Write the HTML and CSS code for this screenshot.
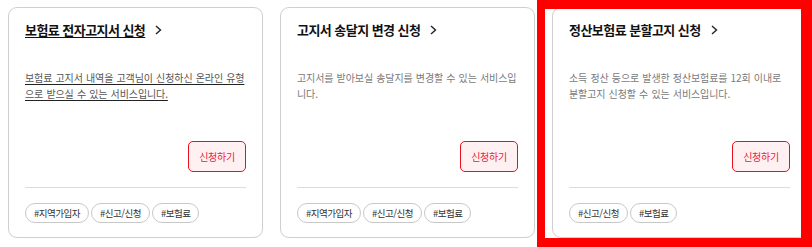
FILE: index.html
```html
<!DOCTYPE html>
<html lang="ko">
<head>
<meta charset="utf-8">
<link rel="stylesheet" href="styles.css">
</head>
<body>
<div class="cards">
  <div class="card is-hover">
    <div class="title"><span class="title-text">보험료 전자고지서 신청</span>
      <svg class="chev" width="7" height="10" viewBox="0 0 7 10"><path d="M1 1 L5.5 5 L1 9" fill="none" stroke="#222" stroke-width="1.4"/></svg>
    </div>
    <p class="desc">보험료 고지서 내역을 고객님이 신청하신 온라인 유형으로 받으실 수 있는 서비스입니다.</p>
    <button class="apply">신청하기</button>
    <div class="divider"></div>
    <div class="tags"><span class="tag">#지역가입자</span><span class="tag">#신고/신청</span><span class="tag">#보험료</span></div>
  </div>
  <div class="card">
    <div class="title"><span class="title-text">고지서 송달지 변경 신청</span>
      <svg class="chev" width="7" height="10" viewBox="0 0 7 10"><path d="M1 1 L5.5 5 L1 9" fill="none" stroke="#222" stroke-width="1.4"/></svg>
    </div>
    <p class="desc">고지서를 받아보실 송달지를 변경할 수 있는 서비스입니다.</p>
    <button class="apply">신청하기</button>
    <div class="divider"></div>
    <div class="tags"><span class="tag">#지역가입자</span><span class="tag">#신고/신청</span><span class="tag">#보험료</span></div>
  </div>
  <div class="card">
    <div class="title"><span class="title-text">정산보험료 분할고지 신청</span>
      <svg class="chev" width="7" height="10" viewBox="0 0 7 10"><path d="M1 1 L5.5 5 L1 9" fill="none" stroke="#222" stroke-width="1.4"/></svg>
    </div>
    <p class="desc desc-words">소득 정산 등으로 발생한 정산보험료를 12회 이내로 분할고지 신청할 수 있는 서비스입니다.</p>
    <button class="apply">신청하기</button>
    <div class="divider"></div>
    <div class="tags"><span class="tag">#신고/신청</span><span class="tag">#보험료</span></div>
  </div>
</div>
<div class="highlight"></div>
</body>
</html>
```

FILE: styles.css
```css
* { box-sizing: border-box; }
html, body { margin: 0; padding: 0; background: #fff; }
body {
  width: 812px;
  height: 247px;
  overflow: hidden;
  position: relative;
  font-family: "Noto Sans CJK KR", "Noto Sans", sans-serif;
  color: #222;
}
.cards {
  display: flex;
  gap: 17px;
  padding: 7px 0 0 8px;
}
.card {
  flex: 0 0 255px;
  height: 231px;
  border: 1px solid #cfcfcf;
  border-radius: 9px;
  padding: 14px 16px 14px 16px;
  display: flex;
  flex-direction: column;
  background: #fff;
}
.title {
  display: flex;
  align-items: center;
  height: 16px;
  gap: 10px;
}
.title-text {
  font-size: 13px;
  font-weight: 700;
  line-height: 16px;
  letter-spacing: -0.55px;
  color: #111;
}
.chev { display: block; flex: none; }
.desc {
  margin: 32px 0 0 0;
  font-size: 10px;
  line-height: 15.5px;
  letter-spacing: -0.1px;
  word-spacing: 0.5px;
  color: #7a7a7a;
}
.desc-words { word-break: keep-all; }
.is-hover .title-text,
.is-hover .desc {
  text-decoration: underline;
  text-underline-offset: 2px;
}
.is-hover .desc { color: #555; text-decoration-color: #222; }
.apply {
  margin-top: auto;
  align-self: flex-end;
  width: 58px;
  height: 31px;
  border: 1px solid #e8121f;
  border-radius: 5px;
  background: #fff0f1;
  color: #e8243a;
  font-family: inherit;
  font-size: 10px;
  letter-spacing: -0.3px;
  padding: 0;
}
.divider {
  margin-top: 15px;
  height: 1px;
  background: #dcdcdc;
  flex: none;
}
.tags {
  margin-top: 15px;
  display: flex;
  gap: 2px;
}
.tag {
  height: 20px;
  border: 1px solid #c8c8c8;
  border-radius: 10px;
  padding: 0 8px;
  font-size: 9.5px;
  line-height: 18px;
  letter-spacing: -0.5px;
  color: #333;
  white-space: nowrap;
}
.highlight {
  position: absolute;
  left: 537px;
  top: 0;
  right: 0;
  bottom: 0;
  border-style: solid;
  border-color: #ff0000;
  border-width: 9px 11px 9px 8px;
  pointer-events: none;
}
```
